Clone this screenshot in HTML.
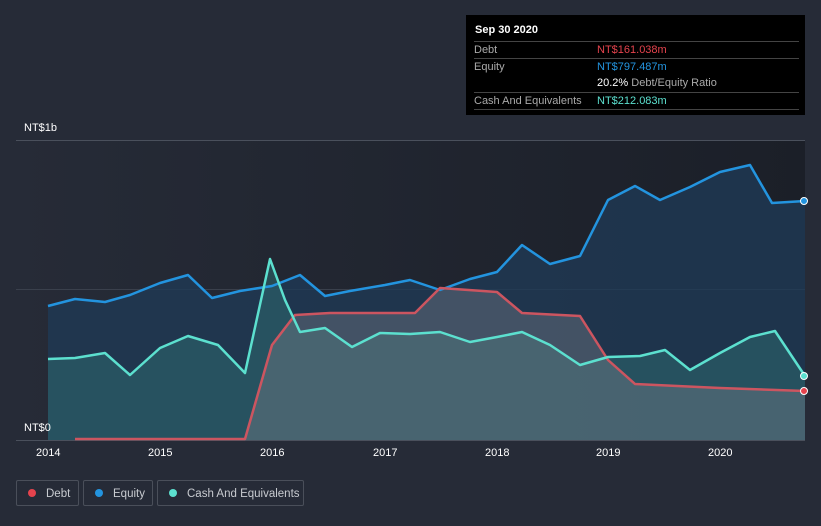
<!DOCTYPE html>
<html><head><meta charset="utf-8"><style>
body{margin:0;width:821px;height:526px;background:#262b37;font-family:"Liberation Sans",sans-serif;overflow:hidden;position:relative}
.tt{position:absolute;left:466px;top:15px;width:339px;height:100px;background:#000;color:#fff;font-size:11px}
.tt .r{position:absolute;left:8px;width:325px;border-top:1px solid #444;height:17px;line-height:17px;color:#aaa}
.lg{position:absolute;top:480px;height:26px;border:1px solid #4a4f5a;border-radius:2px;color:#c8cbd0;font-size:11.5px;line-height:26px;box-sizing:border-box;white-space:nowrap}
.lg i{display:inline-block;width:8px;height:8px;border-radius:50%;margin:0 10px 0 11px}
.ax{position:absolute;color:#fff;font-size:11px}
</style></head><body>
<svg width="821" height="526" style="position:absolute;left:0;top:0">
<defs><linearGradient id="bg" x1="0" x2="1"><stop offset="0" stop-color="#262b37"/><stop offset="1" stop-color="#1b1f28"/></linearGradient></defs>
<rect x="16" y="140" width="789" height="300" fill="url(#bg)"/>
<line x1="16" y1="140.5" x2="805" y2="140.5" stroke="#4a505c"/>
<line x1="16" y1="289.5" x2="805" y2="289.5" stroke="#3a404c"/>
<line x1="16" y1="440.5" x2="805" y2="440.5" stroke="#4a505c"/>
<path d="M48,306 L75,299 105,302 130,295 160,283 188,275 212,298 240,291 272,286 300,275 325,296 350,291 385,285 410,280 440,290 470,279 497,272 522,245 550,264 580,256 608,200 635,186 660,200 690,187 720,172 750,165 772,203 805,201 L805,440 48,440Z" fill="#1f3a55" fill-opacity=".8"/>
<path d="M48,359 L75,358 105,353 130,375 160,348 188,336 218,345 245,373 270,259 285,300 300,332 325,328 352,347 380,333 410,334 440,332 470,342 497,337 522,332 550,345 580,365 608,357 640,356 665,350 690,370 720,353 750,337 775,331 805,376 L805,440 48,440Z" fill="#2e6a70" fill-opacity=".55"/>
<path d="M75,439 L245,439 272,345 295,315 330,313 415,313 440,288 497,292 522,313 580,316 608,360 635,384 720,388 805,391 L805,440 75,440Z" fill="#7a7f8a" fill-opacity=".4"/>
<g fill="none" stroke-width="2.5" stroke-linejoin="round">
<path d="M48,306 L75,299 105,302 130,295 160,283 188,275 212,298 240,291 272,286 300,275 325,296 350,291 385,285 410,280 440,290 470,279 497,272 522,245 550,264 580,256 608,200 635,186 660,200 690,187 720,172 750,165 772,203 805,201" stroke="#2394df"/>
<path d="M75,439 L245,439 272,345 295,315 330,313 415,313 440,288 497,292 522,313 580,316 608,360 635,384 720,388 805,391" stroke="#cc5560"/>
<path d="M48,359 L75,358 105,353 130,375 160,348 188,336 218,345 245,373 270,259 285,300 300,332 325,328 352,347 380,333 410,334 440,332 470,342 497,337 522,332 550,345 580,365 608,357 640,356 665,350 690,370 720,353 750,337 775,331 805,376" stroke="#5ce0cf"/>
</g>
<circle cx="804" cy="201" r="3.5" fill="#2394df" stroke="#fff"/>
<circle cx="804" cy="376" r="3.5" fill="#5ce0cf" stroke="#fff"/>
<circle cx="804" cy="391" r="3.5" fill="#e5434d" stroke="#fff"/>
</svg>
<div class="ax" style="left:24px;top:122px">NT$1b</div>
<div class="ax" style="left:24px;top:422px">NT$0</div>
<div class="ax" style="left:36px;top:447px">2014</div>
<div class="ax" style="left:148px;top:447px">2015</div>
<div class="ax" style="left:260px;top:447px">2016</div>
<div class="ax" style="left:373px;top:447px">2017</div>
<div class="ax" style="left:485px;top:447px">2018</div>
<div class="ax" style="left:596px;top:447px">2019</div>
<div class="ax" style="left:708px;top:447px">2020</div>
<div class="tt">
<div style="position:absolute;left:9px;top:9px;font-weight:bold">Sep 30 2020</div>
<div class="r" style="top:26px">Debt<span style="position:absolute;left:123px;color:#e5434d">NT$161.038m</span></div>
<div class="r" style="top:43px">Equity<span style="position:absolute;left:123px;color:#2394df">NT$797.487m</span></div>
<div class="r" style="top:60px;border:0"><span style="position:absolute;left:123px"><b style="color:#fff;font-weight:normal">20.2%</b> Debt/Equity Ratio</span></div>
<div class="r" style="top:77px">Cash And Equivalents<span style="position:absolute;left:123px;color:#5ce0cf">NT$212.083m</span></div>
<div class="r" style="top:94px;height:0"></div>
</div>
<div class="lg" style="left:16px;width:63px"><i style="background:#e5434d"></i>Debt</div>
<div class="lg" style="left:83px;width:70px"><i style="background:#2394df"></i>Equity</div>
<div class="lg" style="left:157px;width:147px"><i style="background:#5ce0cf"></i>Cash And Equivalents</div>
</body></html>
